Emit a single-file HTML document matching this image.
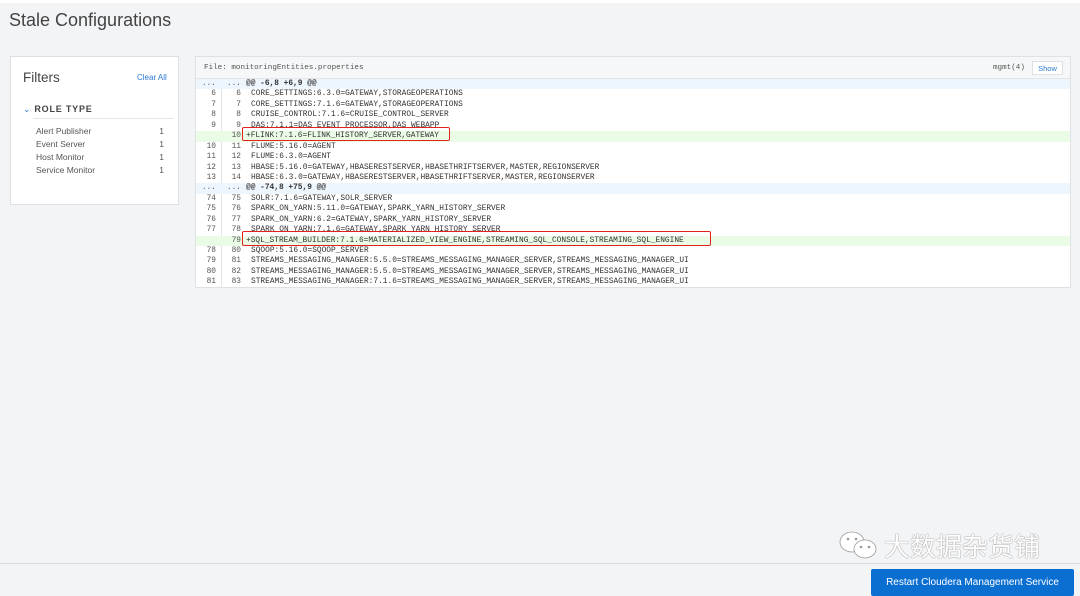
<!DOCTYPE html>
<html><head><meta charset="utf-8"><style>
*{box-sizing:border-box;margin:0;padding:0}
body{width:1080px;height:596px;background:#f3f4f6;font-family:"Liberation Sans",sans-serif;position:relative;overflow:hidden;color:#333}
.top{position:absolute;left:0;top:0;width:1080px;height:3px;background:#fff}
h1{position:absolute;left:9px;top:10px;font-size:18px;font-weight:normal;color:#444}
.filters{position:absolute;left:10px;top:56px;width:169px;height:149px;background:#fff;border:1px solid #dde0e4}
.filters .t{position:absolute;left:12px;top:13px;font-size:13.5px;color:#444}
.filters .c{position:absolute;left:126px;top:16px;font-size:8px;color:#2a7bd3}
.rt{position:absolute;left:12px;top:47px;font-size:9px;font-weight:bold;letter-spacing:.8px;color:#444}
.rt span{color:#2a7bd3;font-weight:normal;margin-right:3px}
.rtline{position:absolute;left:22px;top:61px;width:141px;border-top:1px solid #e3e5e8}
.it{position:absolute;left:25px;font-size:8.5px;color:#555;width:128px}
.it b{position:absolute;right:0;font-weight:normal}
.diff{position:absolute;left:195px;top:56px;width:876px;height:232px;background:#fff;border:1px solid #dde0e4;font-family:"Liberation Mono",monospace;font-size:7.85px;color:#333}
.hdr{height:22px;background:#f6f7f8;border-bottom:1px solid #e3e5e8;position:relative;font-size:7.6px}
.hdr .f{position:absolute;left:8px;top:7px;color:#555}
.hdr .m{position:absolute;left:797px;top:7px;color:#555}
.hdr .s{position:absolute;left:836px;top:4px;width:31px;height:14px;border:1px solid #dde0e4;background:#fff;color:#2a7bd3;font-family:"Liberation Sans",sans-serif;font-size:7.5px;text-align:center;line-height:13px}
.row{height:10.45px;line-height:10.45px;position:relative;white-space:pre}
.row .a{position:absolute;left:0;width:20px;text-align:right;color:#555}
.row .b{position:absolute;left:25px;width:20px;text-align:right;color:#555}
.row .c{position:absolute;left:55px}
.row.h{background:#eef6fd}
.row.h .c{left:50px;font-weight:bold}
.row.add{background:#eafbe6}
.row.add .c{left:50px}
.sep{position:absolute;left:25px;top:22px;width:1px;height:209px;background:#e3e5e8}
.box{position:absolute;border:1.5px solid #e0241b;border-radius:2px}
.bot{position:absolute;left:0;top:563px;width:1080px;border-top:1px solid #d8dbde}
.btn{position:absolute;left:871px;top:569px;width:203px;height:27px;background:#0b6fd2;color:#fff;font-size:10px;text-align:center;line-height:27px;border-radius:2px}
.wm{position:absolute;left:884px;top:527px;font-family:"Noto Sans CJK SC",sans-serif;font-size:26px;color:#fff;text-shadow:0 0 1px #888,0 0 1px #888}
</style></head><body>
<div class="top"></div>
<h1>Stale Configurations</h1>
<div class="filters">
<div class="t">Filters</div><div class="c">Clear All</div>
<div class="rt"><span>⌄</span>ROLE TYPE</div><div class="rtline"></div>
<div class="it" style="top:69px">Alert Publisher<b>1</b></div>
<div class="it" style="top:82px">Event Server<b>1</b></div>
<div class="it" style="top:95px">Host Monitor<b>1</b></div>
<div class="it" style="top:108px">Service Monitor<b>1</b></div>
</div>
<div class="diff">
<div class="hdr"><span class="f">File: monitoringEntities.properties</span><span class="m">mgmt(4)</span><div class="s">Show</div></div>
<div class="sep"></div>
<div class="row h"><span class="a">...</span><span class="b">...</span><span class="c">@@ -6,8 +6,9 @@</span></div>
<div class="row"><span class="a">6</span><span class="b">6</span><span class="c">CORE_SETTINGS:6.3.0=GATEWAY,STORAGEOPERATIONS</span></div>
<div class="row"><span class="a">7</span><span class="b">7</span><span class="c">CORE_SETTINGS:7.1.6=GATEWAY,STORAGEOPERATIONS</span></div>
<div class="row"><span class="a">8</span><span class="b">8</span><span class="c">CRUISE_CONTROL:7.1.6=CRUISE_CONTROL_SERVER</span></div>
<div class="row"><span class="a">9</span><span class="b">9</span><span class="c">DAS:7.1.1=DAS_EVENT_PROCESSOR,DAS_WEBAPP</span></div>
<div class="row add"><span class="a"></span><span class="b">10</span><span class="c">+FLINK:7.1.6=FLINK_HISTORY_SERVER,GATEWAY</span></div>
<div class="row"><span class="a">10</span><span class="b">11</span><span class="c">FLUME:5.16.0=AGENT</span></div>
<div class="row"><span class="a">11</span><span class="b">12</span><span class="c">FLUME:6.3.0=AGENT</span></div>
<div class="row"><span class="a">12</span><span class="b">13</span><span class="c">HBASE:5.16.0=GATEWAY,HBASERESTSERVER,HBASETHRIFTSERVER,MASTER,REGIONSERVER</span></div>
<div class="row"><span class="a">13</span><span class="b">14</span><span class="c">HBASE:6.3.0=GATEWAY,HBASERESTSERVER,HBASETHRIFTSERVER,MASTER,REGIONSERVER</span></div>
<div class="row h"><span class="a">...</span><span class="b">...</span><span class="c">@@ -74,8 +75,9 @@</span></div>
<div class="row"><span class="a">74</span><span class="b">75</span><span class="c">SOLR:7.1.6=GATEWAY,SOLR_SERVER</span></div>
<div class="row"><span class="a">75</span><span class="b">76</span><span class="c">SPARK_ON_YARN:5.11.0=GATEWAY,SPARK_YARN_HISTORY_SERVER</span></div>
<div class="row"><span class="a">76</span><span class="b">77</span><span class="c">SPARK_ON_YARN:6.2=GATEWAY,SPARK_YARN_HISTORY_SERVER</span></div>
<div class="row"><span class="a">77</span><span class="b">78</span><span class="c">SPARK_ON_YARN:7.1.6=GATEWAY,SPARK_YARN_HISTORY_SERVER</span></div>
<div class="row add"><span class="a"></span><span class="b">79</span><span class="c">+SQL_STREAM_BUILDER:7.1.6=MATERIALIZED_VIEW_ENGINE,STREAMING_SQL_CONSOLE,STREAMING_SQL_ENGINE</span></div>
<div class="row"><span class="a">78</span><span class="b">80</span><span class="c">SQOOP:5.16.0=SQOOP_SERVER</span></div>
<div class="row"><span class="a">79</span><span class="b">81</span><span class="c">STREAMS_MESSAGING_MANAGER:5.5.0=STREAMS_MESSAGING_MANAGER_SERVER,STREAMS_MESSAGING_MANAGER_UI</span></div>
<div class="row"><span class="a">80</span><span class="b">82</span><span class="c">STREAMS_MESSAGING_MANAGER:5.5.0=STREAMS_MESSAGING_MANAGER_SERVER,STREAMS_MESSAGING_MANAGER_UI</span></div>
<div class="row"><span class="a">81</span><span class="b">83</span><span class="c">STREAMS_MESSAGING_MANAGER:7.1.6=STREAMS_MESSAGING_MANAGER_SERVER,STREAMS_MESSAGING_MANAGER_UI</span></div>
</div>
<div class="box" style="left:242px;top:127px;width:208px;height:14px"></div>
<div class="box" style="left:242px;top:231px;width:469px;height:15px"></div>
<div class="wm">大数据杂货铺</div>
<svg style="position:absolute;left:838px;top:530px" width="44" height="32" viewBox="0 0 44 32"><ellipse cx="14" cy="12" rx="12" ry="10" fill="#fff" stroke="#999" stroke-width="0.8"/><ellipse cx="27" cy="19" rx="11" ry="9" fill="#fff" stroke="#999" stroke-width="0.8"/><circle cx="23" cy="17" r="1.3" fill="#999"/><circle cx="31" cy="17" r="1.3" fill="#999"/><circle cx="10" cy="9" r="1.3" fill="#999"/><circle cx="18" cy="9" r="1.3" fill="#999"/></svg>
<div class="bot"></div>
<div class="btn">Restart Cloudera Management Service</div>
</body></html>
